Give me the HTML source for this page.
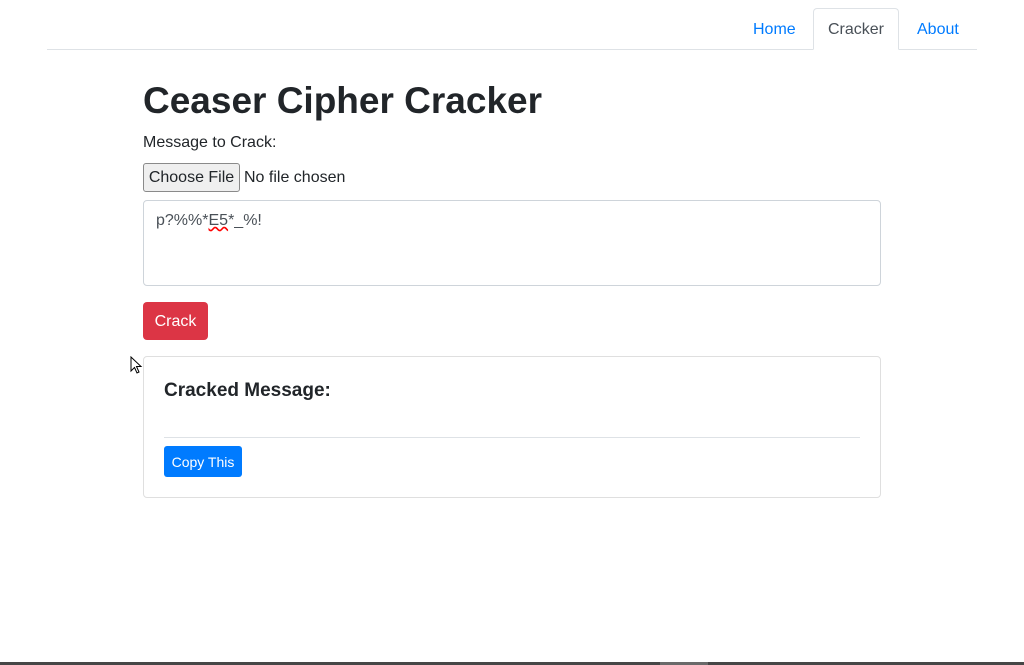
<!DOCTYPE html>
<html><head><style>
*{box-sizing:border-box;margin:0;padding:0}
body{width:1024px;height:665px;overflow:hidden;background:#fff;font-family:"Liberation Sans",sans-serif;color:#212529;position:relative;font-size:16px}
.nav{position:absolute;left:47px;top:49px;width:930px;border-top:1px solid #dee2e6}
.tab{position:absolute;top:0;height:40px;line-height:40px;font-size:16px;color:#007bff;padding:0 16px}
.active{border:1px solid #dee2e6;border-bottom:1px solid #fff;border-radius:4px 4px 0 0;color:#495057;background:#fff}
.abs{position:absolute}
</style></head><body>
<div class="nav"></div>
<div class="tab abs" style="left:737px;top:10px;">Home</div>
<div class="tab abs active" style="left:813px;top:8px;width:86px;height:42px;line-height:42px;padding:0;text-align:center">Cracker</div>
<div class="tab abs" style="left:901px;top:10px;">About</div>
<div class="abs" style="left:143px;top:77px;font-size:37px;font-weight:bold;line-height:48px">Ceaser Cipher Cracker</div>
<div class="abs" style="left:143px;top:134px;font-size:16px">Message to Crack:</div>
<div class="abs" style="left:143px;top:163px;width:97px;height:29px;border:1px solid #8a8a8a;border-radius:3px;background:#efefef;font-size:16px;line-height:27px;text-align:center">Choose File</div>
<div class="abs" style="left:244px;top:169px;font-size:16px">No file chosen</div>
<div class="abs" style="left:143px;top:200px;width:738px;height:86px;border:1px solid #ced4da;border-radius:4px;padding:11px 12px;color:#495057">p?%%*<span style="text-decoration:underline wavy red">E5</span>*_%!</div>
<div class="abs" style="left:143px;top:302px;width:65px;height:38px;background:#dc3545;border-radius:4px;color:#fff;text-align:center;line-height:40px">Crack</div>
<div class="abs" style="left:143px;top:356px;width:738px;height:142px;border:1px solid #dfdfdf;border-radius:4px"></div>
<div class="abs" style="left:164px;top:380px;font-size:19px;font-weight:bold">Cracked Message:</div>
<div class="abs" style="left:164px;top:437px;width:696px;border-top:1px solid #dee2e6"></div>
<div class="abs" style="left:164px;top:446px;width:78px;height:31px;background:#007bff;border-radius:3px;color:#fff;font-size:14px;line-height:33px;text-align:center">Copy This</div>
<svg class="abs" style="left:130px;top:356px" width="14" height="20"><path d="M1 1 L1 15 L4.5 11.5 L7 17 L9 16 L6.5 10.5 L11 10.5 Z" fill="#fff" stroke="#000" stroke-width="1"/></svg>
<div class="abs" style="left:0;top:662px;width:1024px;height:3px;background:#464646"></div>
<div class="abs" style="left:660px;top:662px;width:48px;height:3px;background:#6a6a6a"></div>
</body></html>
